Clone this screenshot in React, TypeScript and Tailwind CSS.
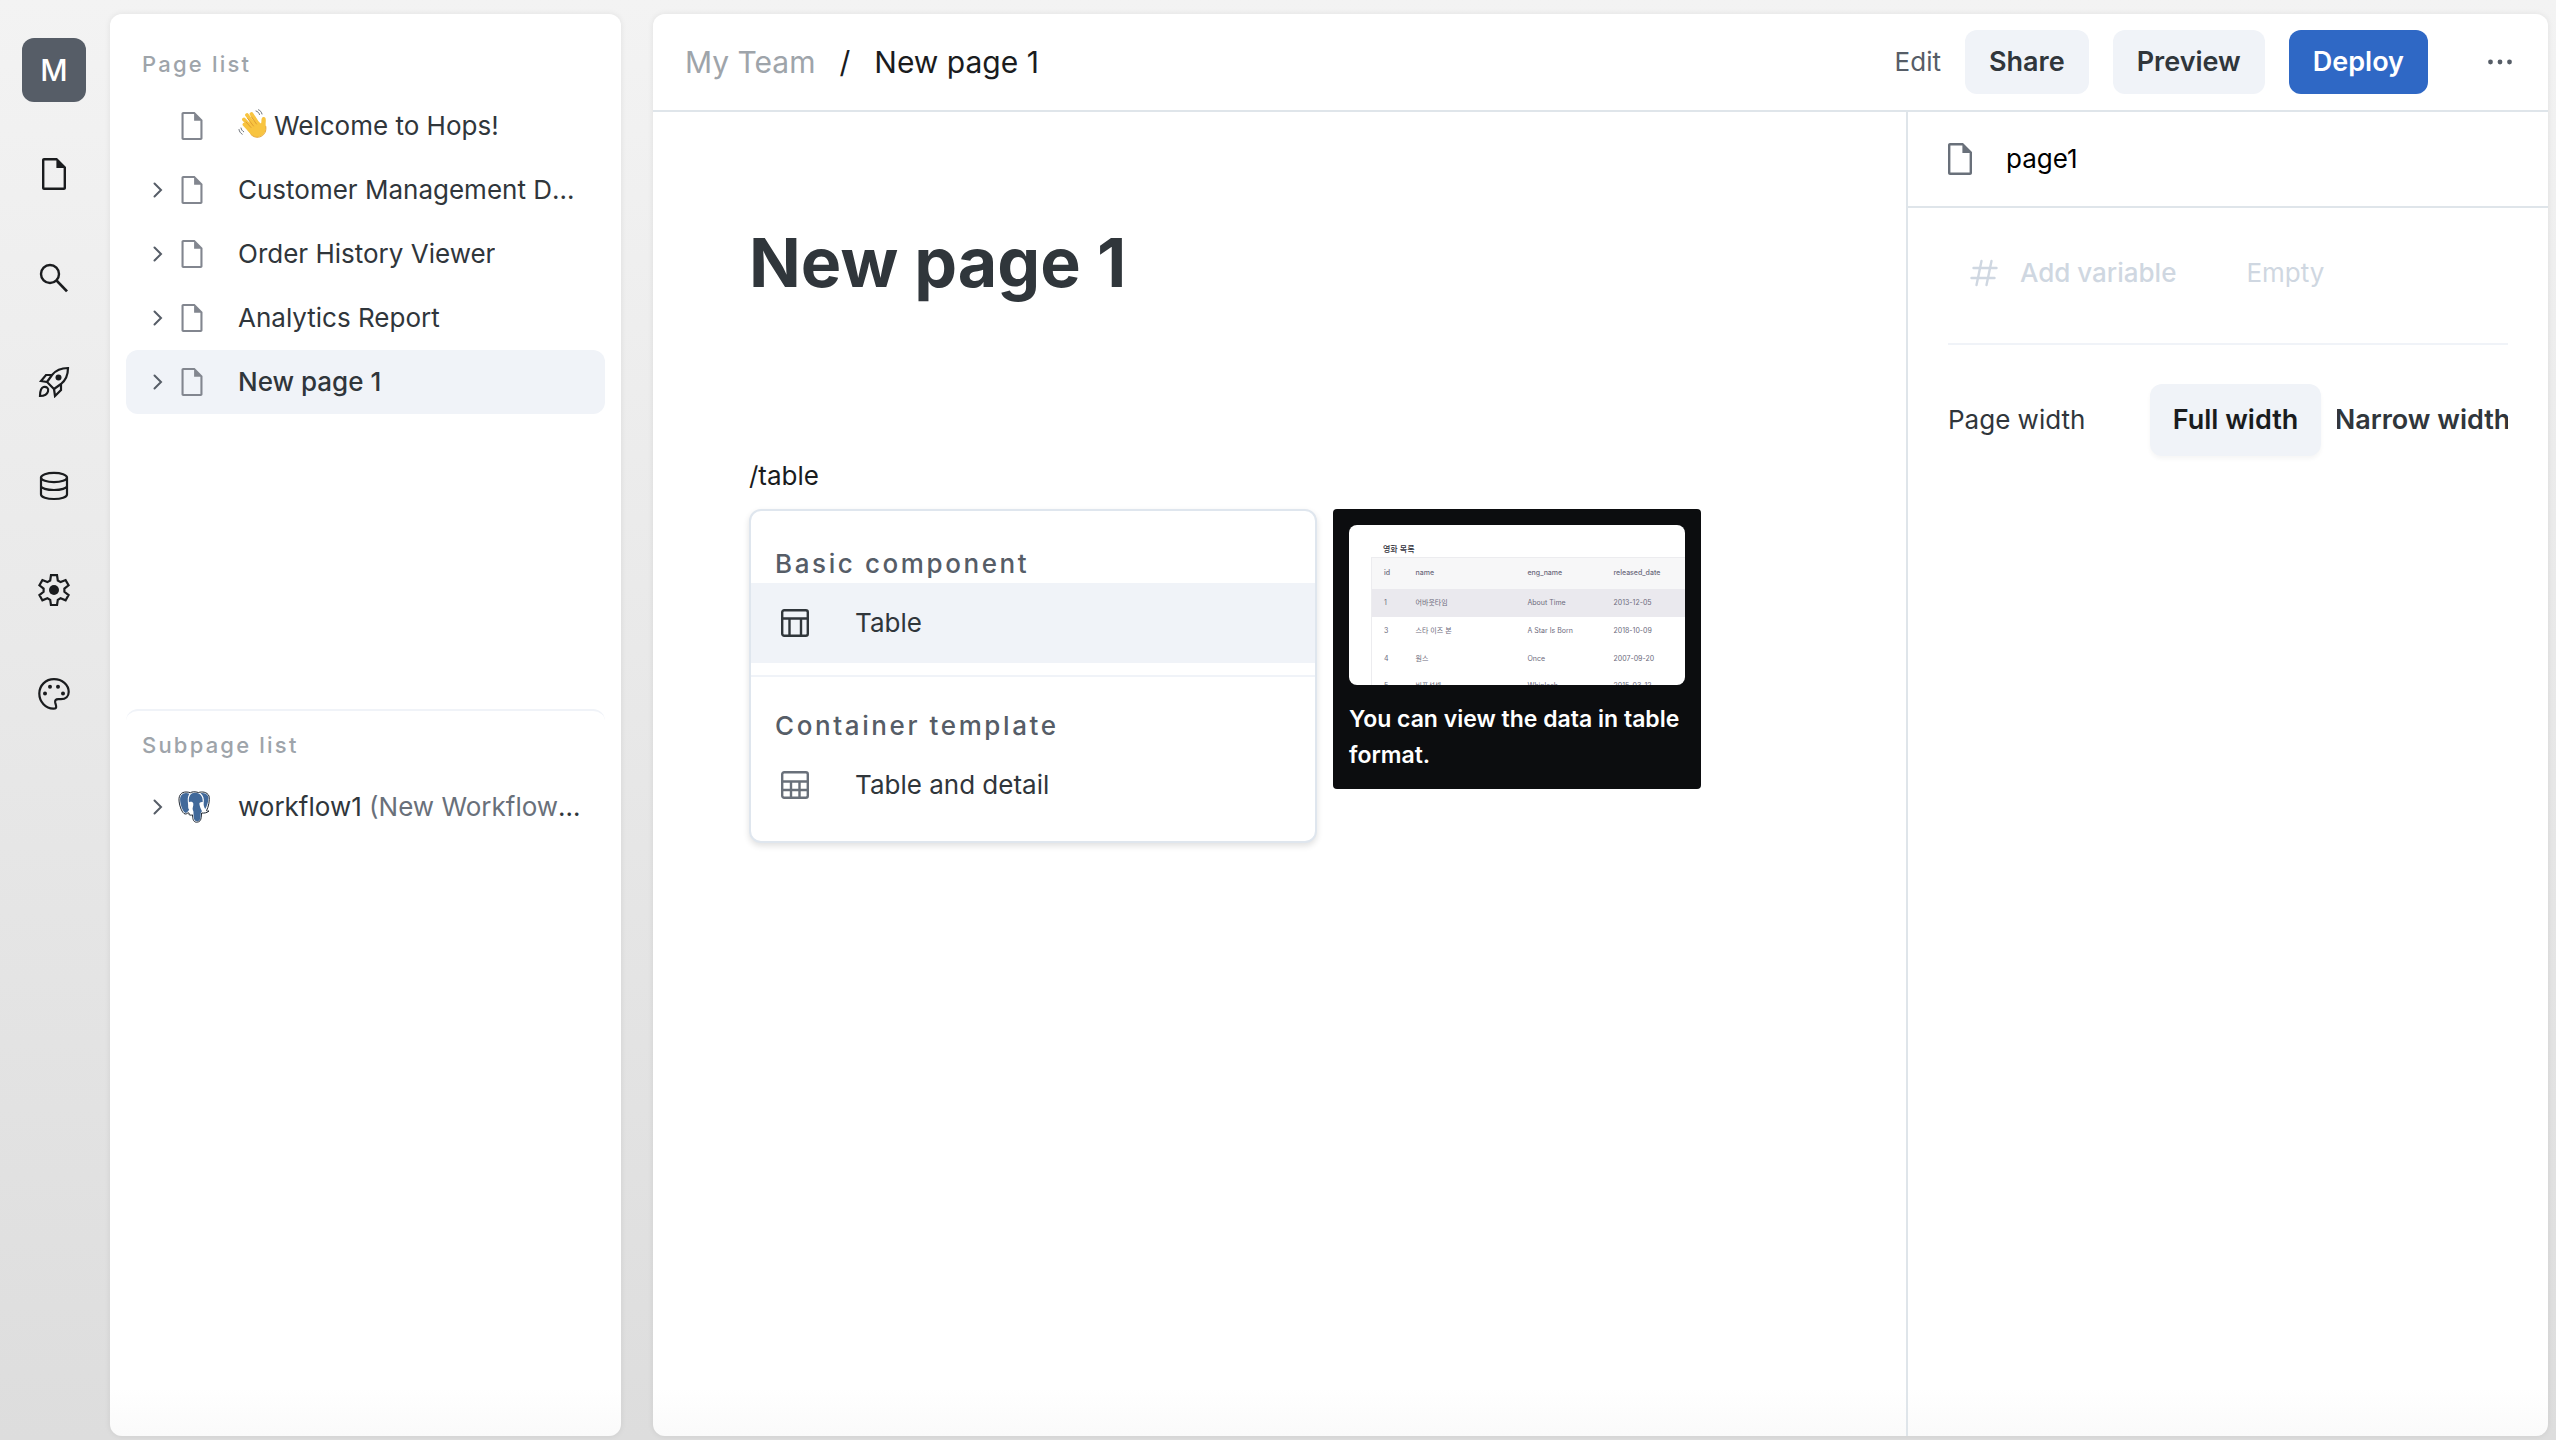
import type { ReactNode } from 'react';

interface IconProps {
  className?: string;
}

function DocumentIcon({ className }: IconProps) {
  return (
    <svg viewBox="0 0 16 16" fill="currentColor" className={className} aria-hidden="true">
      <path d="M9.500 0H3c-.55 0-1 .45-1 1v14c0 .55.45 1 1 1h10c.55 0 1-.45 1-1V4.500L9.500 0zm3.300 14.800H3.200V1.200h6V5h3.600v9.800z" />
    </svg>
  );
}

function SearchIcon({ className }: IconProps) {
  return (
    <svg viewBox="0 0 32 32" fill="none" stroke="currentColor" strokeWidth="2.4" className={className} aria-hidden="true">
      <circle cx="12" cy="12" r="9" />
      <path d="M18.4 18.4 29 29.4" strokeWidth="2.8" />
    </svg>
  );
}

function RocketIcon({ className }: IconProps) {
  return (
    <svg viewBox="0 0 32 32" fill="none" stroke="currentColor" strokeWidth="2.2" strokeLinejoin="miter" className={className} aria-hidden="true">
      <path d="M30 2c-7 0-12 2-16 7l-5 7 7 7 7-5c5-4 7-9 7-16z" />
      <path d="M14 9H8l-5 6 6 1M23 18v6l-6 6-1-7" />
      <path d="M2 30c0-5 .5-8 3.500-9 3-.8 5.500 1.500 4.500 4.500-1 3.500-4 4.500-8 4.500z" />
      <circle cx="20.500" cy="11.500" r="3" fill="currentColor" stroke="none" />
    </svg>
  );
}

function DatabaseIcon({ className }: IconProps) {
  return (
    <svg viewBox="0 0 32 32" fill="none" stroke="currentColor" strokeWidth="2.2" className={className} aria-hidden="true">
      <ellipse cx="16" cy="7.500" rx="13" ry="4.700" />
      <path d="M3 7.500v17c0 2.600 5.800 4.500 13 4.500s13-1.900 13-4.500v-17M3 16c0 2.200 5.800 4 13 4s13-1.800 13-4" />
    </svg>
  );
}

function SettingsIcon({ className }: IconProps) {
  return (
    <svg viewBox="0 0 32 32" fill="none" stroke="currentColor" strokeWidth="2.2" className={className} aria-hidden="true">
      <path d="M13 1.200h6l.8 5.300 2.800 1.600 5-2 3 5.200-4.200 3.300v3.200l4.200 3.300-3 5.200-5-2-2.800 1.600-.8 5.300h-6l-.8-5.300-2.800-1.600-5 2-3-5.200 4.200-3.300v-3.200L1.400 11.300l3-5.200 5 2 2.800-1.600z" />
      <circle cx="16" cy="16" r="5" fill="currentColor" stroke="none" />
    </svg>
  );
}

function PaletteIcon({ className }: IconProps) {
  return (
    <svg viewBox="0 0 32 32" fill="none" stroke="currentColor" strokeWidth="2.200" className={className} aria-hidden="true">
      <path d="M16 1.200C7.500 1.200 1.300 7.500 1.300 15.500c0 8.500 6.500 15 14 15.200 2.600.1 3.300-1 2.700-3.200l-.8-3c-.4-2.200.6-3.300 3-3.300h2.800c4.800 0 7.700-3 7.700-7.200 0-7.300-6.500-12.800-14.700-12.800z" />
      <g fill="currentColor" stroke="none">
        <circle cx="7" cy="15.500" r="2" />
        <circle cx="12" cy="8.700" r="2" />
        <circle cx="20" cy="8.700" r="2" />
        <circle cx="25" cy="15.500" r="2" />
      </g>
    </svg>
  );
}

function ChevronIcon({ className }: IconProps) {
  return (
    <svg viewBox="0 0 10 16" fill="none" stroke="currentColor" strokeWidth="2" strokeLinecap="round" className={className} aria-hidden="true">
      <path d="m1.500 1.500 6.500 6.500-6.500 6.500" />
    </svg>
  );
}

function HashIcon({ className }: IconProps) {
  return (
    <svg viewBox="0 0 28 28" fill="none" stroke="currentColor" strokeWidth="2.400" strokeLinecap="round" className={className} aria-hidden="true">
      <path d="M11.500 2 6.500 26M21.500 2l-5 24M3.500 9h23M1.500 19h23" />
    </svg>
  );
}

function TableIcon({ className }: IconProps) {
  return (
    <svg viewBox="0 0 28 28" fill="none" stroke="currentColor" strokeWidth="2.400" className={className} aria-hidden="true">
      <rect x="1.200" y="1.200" width="25.600" height="25.600" rx="2" />
      <path d="M1 9.500h26M8.500 9.500V27M20 9.500V27" />
    </svg>
  );
}

function TableDetailIcon({ className }: IconProps) {
  return (
    <svg viewBox="0 0 28 28" fill="none" stroke="currentColor" strokeWidth="2.400" className={className} aria-hidden="true">
      <rect x="1.200" y="1.200" width="25.600" height="25.600" rx="2" />
      <path d="M1 10.500h26M1 19h26M10 10.500V27M18.500 10.500V27" />
    </svg>
  );
}

function MoreIcon({ className }: IconProps) {
  return (
    <svg viewBox="0 0 24 8" fill="currentColor" className={className} aria-hidden="true">
      <circle cx="2.500" cy="4" r="2.400" />
      <circle cx="12" cy="4" r="2.400" />
      <circle cx="21.500" cy="4" r="2.400" />
    </svg>
  );
}

function WaveIcon({ className }: IconProps) {
  return (
    <svg viewBox="0 0 30 30" fill="none" strokeLinecap="round" className={className} aria-hidden="true">
      <g stroke="#f8c440" strokeWidth="3.800">
        <path d="M14 19 6 10.500M17 17 9 6M20 15l-6.500-10M13 22.500 6.500 15.500" />
      </g>
      <path
        d="M12 11.500 19.500 12l3.500 2.500c.8-1.200 0-3.500.8-5.300.8-1.700 3.200-1.700 3.800.3.600 2.500-.3 4.500.2 7.500.6 4.500-1 8-4.500 10-4 2.200-8 1-10.800-2L9 20.500z"
        fill="#f8c440"
      />
      <path d="m8 13 5 5.500M9.700 9.500l5.800 7.500M13.500 8l5 7" stroke="#dc9830" strokeWidth=".9" />
      <path d="M27.800 17.500c.6 4.500-1 8-4.500 9.800-4 2-8 .8-10.500-2" stroke="#e8a83a" strokeWidth="1" />
      <path d="M18 2c1.800.5 3 1.700 3.500 3.500M20.500.8c2 .8 3 2.200 3.500 4.200M1 20.500c.4 2.200 1.500 3.700 3.200 4.700M3 19c.4 1.800 1.300 3 2.700 3.800" stroke="#6b7178" strokeWidth="1" />
    </svg>
  );
}

function PostgresIcon({ className }: IconProps) {
  return (
    <svg viewBox="0 0 32 32" className={className} aria-hidden="true">
      <path
        d="M8 1C3.500 1 .8 4 1 9c.2 5 2.500 11.500 5 13.500 1.500 1 3 .4 4-.8l1.200.6c-.8 1.200 0 2 2.300 1.800l1-.2c.2 3 .4 7.300 4 7.300 3.200 0 4.500-2 4.700-5l.4-4.200c3 .3 5.500-.2 7.400-2-1.200.2-2 .2-2.500-.3C30.500 16 32 9 31 5 29 .7 24 .5 20.500 1.500 17 .5 14 .6 12.500 1.700 11 1.200 9.500 1 8 1z"
        fill="#fff"
        stroke="#1c2530"
        strokeWidth="1"
      />
      <path
        d="M8 2C4.200 2 1.900 5 2.100 9c.2 4.500 2.400 11 4.700 12.600 1 .6 2 .2 2.800-.8l1.600-2C9.600 17 10.400 15 10 12.500 9.600 9 9.400 5.500 11.400 2.800 10.200 2.300 9.100 2 8 2z"
        fill="#41699a"
      />
      <path
        d="M17 1.800c-4.300 0-6.400 3.200-6.200 8.200l.2 1.200c1.600-.8 3.900-.7 4.300 1.200.5 2.600-1.400 4.600-.4 6.900.7.800.6 1.800.6 3.200.1 3.500.3 7.700 3.300 7.800 2.500 0 3.500-1.500 3.700-4 .2-2.800-.2-5 1.500-6.100-1.200-2.300-2.300-4.700-2.600-7.200-.2-1.500 1.600-2.200 3.300-1.900.3-4.700-1.700-9.300-7.700-9.300z"
        fill="#41699a"
      />
      <path
        d="M22.400 2.100c2.900 2.200 4 5.700 3.300 10-.3 2.200.3 4 1.500 5.900 2.100-3 3.800-9.300 3-12.500C29.200 2.500 25.600 1.700 22.400 2.100z"
        fill="#41699a"
      />
    </svg>
  );
}

const navItems = [
  { label: 'Pages', Icon: DocumentIcon },
  { label: 'Search', Icon: SearchIcon },
  { label: 'Deployments', Icon: RocketIcon },
  { label: 'Data sources', Icon: DatabaseIcon },
  { label: 'Settings', Icon: SettingsIcon },
  { label: 'Theme', Icon: PaletteIcon },
];

const pages = [
  { title: 'Welcome to Hops!', wave: true, expandable: false },
  { title: 'Customer Management Dashboard', expandable: true },
  { title: 'Order History Viewer', expandable: true },
  { title: 'Analytics Report', expandable: true },
  { title: 'New page 1', expandable: true, active: true },
];

const movies = [
  { id: 1, name: '어바웃타임', engName: 'About Time', released: '2013-12-05', selected: true },
  { id: 3, name: '스타 이즈 본', engName: 'A Star Is Born', released: '2018-10-09' },
  { id: 4, name: '원스', engName: 'Once', released: '2007-09-20' },
  { id: 5, name: '비포선셋', engName: 'Whiplash', released: '2015-03-12' },
];

function SideNav() {
  return (
    <nav className="flex w-[110px] shrink-0 flex-col items-center pt-[38px] pr-[2px]">
      <button
        type="button"
        className="flex h-16 w-16 items-center justify-center rounded-xl bg-[#565d67] text-[30px] leading-10 font-medium text-white"
      >
        M
      </button>
      <div className="mt-10 flex flex-col gap-10">
        {navItems.map(({ label, Icon }) => (
          <button key={label} type="button" aria-label={label} className="flex h-16 w-16 items-center justify-center text-[#1a1c1e]">
            <Icon className="h-8 w-8" />
          </button>
        ))}
      </div>
    </nav>
  );
}

interface TreeRowProps {
  icon: ReactNode;
  expandable?: boolean;
  active?: boolean;
  children: ReactNode;
}

function TreeRow({ icon, expandable, active, children }: TreeRowProps) {
  return (
    <li>
      <a
        href="#"
        className={`flex h-16 items-center rounded-xl pr-5 pl-[27px] text-[26px] leading-10 text-[#30363b] ${
          active ? 'bg-[#f0f3f8] font-medium' : ''
        }`}
      >
        <span className="w-[25px] shrink-0">
          {expandable && <ChevronIcon className="h-4 w-[10px] text-[#565d67]" />}
        </span>
        <span className="flex w-[60px] shrink-0">{icon}</span>
        <span className="min-w-0 truncate">{children}</span>
      </a>
    </li>
  );
}

function PageSidebar() {
  return (
    <aside className="flex w-[511px] shrink-0 flex-col rounded-xl bg-linear-to-t from-[#fafafa] to-white to-[48px] px-4 shadow-[0_0_6px_rgba(0,0,0,0.08)]">
      <section className="h-[695px]">
        <h2 className="px-4 pt-[34px] pb-[14px] text-[22px] leading-8 font-medium tracking-widest text-[#9ea4aa]">Page list</h2>
        <ul>
          {pages.map((page) => (
            <TreeRow
              key={page.title}
              expandable={page.expandable}
              active={page.active}
              icon={<DocumentIcon className="h-7 w-7 text-[#82868f]" />}
            >
              {page.wave && <WaveIcon className="mr-[6px] inline-block h-[30px] w-[30px] align-[-4px]" />}
              {page.title}
            </TreeRow>
          ))}
        </ul>
      </section>
      <section className="rounded-xl border-t-2 border-[#f0f3f8]">
        <h2 className="px-4 pt-[18px] pb-[14px] text-[22px] leading-8 font-medium tracking-widest text-[#9ea4aa]">Subpage list</h2>
        <ul>
          <TreeRow expandable icon={<PostgresIcon className="h-8 w-8" />}>
            workflow1 <span className="text-[#69707a]">(New Workflow Page)</span>
          </TreeRow>
        </ul>
      </section>
    </aside>
  );
}

function TopBar() {
  return (
    <header className="flex h-[98px] shrink-0 items-center justify-between border-b-2 border-[#dfe5ea] pr-4 pl-8">
      <div className="flex items-center gap-6 text-[30px] leading-10 text-[#1a1c1e]">
        <a href="#" className="text-[#9ea4aa]">My Team</a>
        <span>/</span>
        <span>New page 1</span>
      </div>
      <div className="flex items-center gap-6 text-[27px] leading-10 font-semibold text-[#30363b]">
        <button type="button" className="text-[26px] font-normal text-[#565d67]">Edit</button>
        <button type="button" className="h-16 rounded-xl bg-[#f0f3f8] px-6">Share</button>
        <button type="button" className="h-16 rounded-xl bg-[#f0f3f8] px-6">Preview</button>
        <button type="button" className="h-16 rounded-xl bg-[#2f68c5] px-6 text-white">Deploy</button>
        <button type="button" aria-label="More" className="ml-4 flex h-16 w-16 items-center justify-center text-[#565d67]">
          <MoreIcon className="h-2 w-6" />
        </button>
      </div>
    </header>
  );
}

interface MenuGroupProps {
  title: string;
  children: ReactNode;
}

function MenuGroup({ title, children }: MenuGroupProps) {
  return (
    <div>
      <h3 className="px-6 pt-[30px] text-[26px] leading-[38px] font-medium tracking-widest text-[#565d67]">{title}</h3>
      {children}
    </div>
  );
}

function SlashMenu() {
  return (
    <div className="w-[568px] shrink-0 rounded-xl border-2 border-[#dfe6ee] bg-white pt-1 pb-4 shadow-[0_3px_6px_rgba(0,0,0,0.12)]">
      <div className="border-b-2 border-[#f0f3f8] pb-3">
        <MenuGroup title="Basic component">
          <button type="button" className="flex h-20 w-full items-center gap-[46px] bg-[#f0f3f8] px-[30px] text-[26px] leading-10 text-[#30363b]">
            <TableIcon className="h-7 w-7" />
            Table
          </button>
        </MenuGroup>
      </div>
      <MenuGroup title="Container template">
        <button type="button" className="flex h-20 w-full items-center gap-[46px] px-[30px] text-[26px] leading-10 text-[#30363b]">
          <TableDetailIcon className="h-7 w-7 text-[#69707a]" />
          Table and detail
        </button>
      </MenuGroup>
    </div>
  );
}

function TablePreview() {
  return (
    <div className="h-40 overflow-hidden rounded-lg bg-white pt-4 pl-[22px] text-[#6c6a7c]">
      <p className="px-3 text-[8px] leading-4 font-medium text-[#30303a]">영화 목록</p>
      <table className="w-[340px] table-fixed border-collapse border border-[#ececef] text-left text-[7px] leading-3">
        <thead>
          <tr className="h-[31px] bg-[#f7f7f8]">
            <th className="w-[44px] pl-3 font-medium">id</th>
            <th className="w-[112px] font-medium">name</th>
            <th className="w-[86px] font-medium">eng_name</th>
            <th className="w-[70px] font-medium">released_date</th>
            <th />
          </tr>
        </thead>
        <tbody>
          {movies.map((movie) => (
            <tr key={movie.id} className={movie.selected ? 'h-7 bg-[#eae9ee]' : 'h-7'}>
              <td className="pl-3">{movie.id}</td>
              <td>{movie.name}</td>
              <td>{movie.engName}</td>
              <td>{movie.released}</td>
              <td />
            </tr>
          ))}
        </tbody>
      </table>
    </div>
  );
}

function Editor() {
  return (
    <main className="min-w-0 flex-1 px-24 pt-[104px]">
      <h1 className="text-[68px] leading-[92px] font-bold text-[#30363b]">New page 1</h1>
      <div className="mt-[148px]">
        <input
          type="text"
          aria-label="Block"
          defaultValue="/table"
          className="block h-10 w-full text-[26px] leading-10 text-[#1a1c1e] outline-none"
        />
        <div className="mt-[13px] flex items-start gap-4">
          <SlashMenu />
          <div className="w-[368px] shrink-0 rounded-sm bg-[#0c0d0f] p-4">
            <TablePreview />
            <p className="pt-4 text-[23px] leading-9 font-semibold text-white">You can view the data in table format.</p>
          </div>
        </div>
      </div>
    </main>
  );
}

function Inspector() {
  return (
    <aside className="w-[642px] shrink-0 border-l-2 border-[#dfe5ea] text-[26px] leading-10">
      <div className="flex h-24 items-center gap-[30px] border-b-2 border-[#dfe5ea] px-9">
        <DocumentIcon className="h-8 w-8 text-[#69707a]" />
        <span className="text-black">page1</span>
      </div>
      <div className="px-10">
        <div className="flex h-[137px] items-center border-b-2 border-[#f0f3f8] px-[22px] pb-[6px] text-[#cfd7e1]">
          <HashIcon className="h-7 w-7" />
          <button type="button" className="ml-[22px] font-medium">Add variable</button>
          <span className="ml-[70px]">Empty</span>
        </div>
        <div className="flex items-center justify-between pt-[39px] text-[#30363b]">
          <span>Page width</span>
          <div className="flex gap-4 text-[27px] font-semibold">
            <button type="button" className="h-[72px] w-[171px] rounded-xl bg-[#f0f3f8] text-[#1a1c1e] shadow-[0_3px_4px_rgba(0,0,0,0.04)]">
              Full width
            </button>
            <button type="button" className="flex h-[72px] w-[171px] justify-center overflow-hidden">
              <span className="shrink-0 leading-[72px]">Narrow width</span>
            </button>
          </div>
        </div>
      </div>
    </aside>
  );
}

export default function App() {
  return (
    <div className="flex h-screen bg-linear-to-b from-[#f3f3f3] to-[#dddddd] pr-2 font-[Inter,'Noto_Sans_CJK_KR',sans-serif]">
      <SideNav />
      <div className="flex min-w-0 flex-1 gap-8 pt-[14px] pb-1">
        <PageSidebar />
        <div className="flex min-w-0 flex-1 flex-col rounded-xl bg-linear-to-t from-[#fafafa] to-white to-[48px] shadow-[0_0_6px_rgba(0,0,0,0.08)]">
          <TopBar />
          <div className="flex min-h-0 flex-1">
            <Editor />
            <Inspector />
          </div>
        </div>
      </div>
    </div>
  );
}
